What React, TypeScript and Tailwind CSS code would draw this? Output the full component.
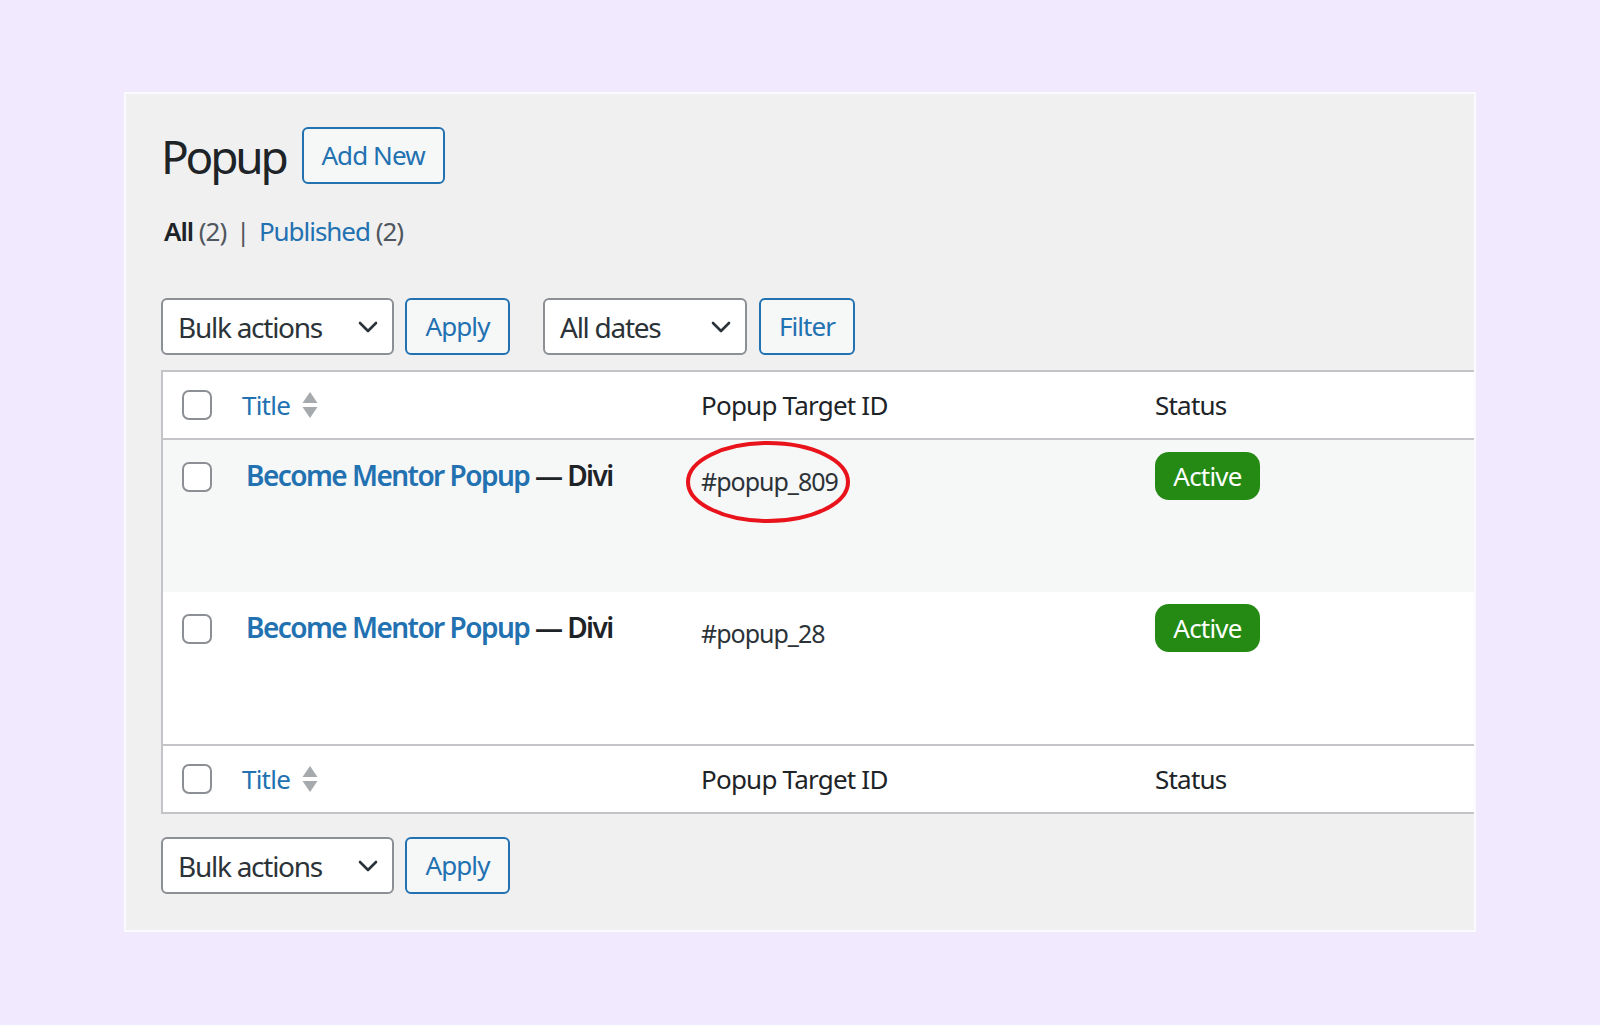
import type { ReactNode } from "react";

const font = { fontFamily: '"Noto Sans", "Open Sans", sans-serif' };

function Chevron() {
  return (
    <svg width="20" height="12" viewBox="0 0 20 12" className="shrink-0">
      <polyline points="2,2 10,10 18,2" fill="none" stroke="#2c3338" strokeWidth="2.6" strokeLinecap="round" strokeLinejoin="round" />
    </svg>
  );
}

function SelectBox({ label, width }: { label: string; width: string }) {
  return (
    <div className={`${width} h-[57px] flex items-center justify-between pl-[15px] pr-[14px] bg-white border-2 border-[#8c8f94] rounded-[6px] text-[28px] tracking-[-0.045em] text-[#2c3338]`}>
      <span>{label}</span>
      <Chevron />
    </div>
  );
}

function OutlineButton({ children, width }: { children: ReactNode; width: string }) {
  return (
    <button className={`${width} h-[57px] flex items-center justify-center bg-[#f6f7f7] border-2 border-[#2271b1] rounded-[6px] text-[26px] tracking-[-0.035em] text-[#2271b1]`}>
      {children}
    </button>
  );
}

function Checkbox() {
  return <div className="w-[30px] h-[30px] bg-white border-2 border-[#8c8f94] rounded-[7px]" />;
}

function SortArrows() {
  return (
    <svg width="16" height="28" viewBox="0 0 16 28" className="ml-[12px]">
      <polygon points="8,1 15.5,12 0.5,12" fill="#a7aaad" />
      <polygon points="0.5,16 15.5,16 8,27" fill="#a7aaad" />
    </svg>
  );
}

function HeadRow({ top }: { top: boolean }) {
  return (
    <div className={`grid grid-cols-[61px_458px_454px_1fr] h-[68px] items-center bg-white ${top ? "border-b-2" : "border-t-2"} border-[#c3c4c7] text-[26px] tracking-[-0.03em]`}>
      <div className="pl-[19px]">
        <Checkbox />
      </div>
      <div className="pl-[18px] flex items-center text-[#2271b1]">
        <span>Title</span>
        <SortArrows />
      </div>
      <div className="pl-[19px] text-[#1d2327]">Popup Target ID</div>
      <div className="pl-[19px] text-[#1d2327]">Status</div>
    </div>
  );
}

function DataRow({ target, shade, circled }: { target: string; shade: boolean; circled?: boolean }) {
  return (
    <div className={`grid grid-cols-[61px_458px_454px_1fr] h-[152px] ${shade ? "bg-[#f6f7f7]" : "bg-white"}`}>
      <div className="pl-[19px] pt-[22px]">
        <Checkbox />
      </div>
      <div className="pl-[22px] pt-[15px] text-[28px] font-semibold leading-[40px] tracking-[-0.055em]">
        <span className="text-[#2271b1]">Become Mentor Popup</span>
        <span className="text-[#1d2327]"> — Divi</span>
      </div>
      <div className="pl-[19px] pt-[23px] text-[25px] leading-[36px] tracking-[-0.04em] text-[#2c3338]">
        <span className="relative">
          {target}
          {circled && (
            <svg width="170" height="88" viewBox="0 0 170 88" className="absolute left-[-17px] top-[-26px] pointer-events-none">
              <ellipse cx="84" cy="44" rx="80" ry="39" fill="none" stroke="#e8131b" strokeWidth="4" />
            </svg>
          )}
        </span>
      </div>
      <div className="pl-[19px] pt-[12px]">
        <div className="w-[105px] h-[48px] flex items-center justify-center bg-[#248a14] rounded-[14px] text-white text-[26px] tracking-[-0.03em]">
          Active
        </div>
      </div>
    </div>
  );
}

export default function App() {
  return (
    <div className="w-[1600px] h-[1025px] bg-[#f1e9fe] pt-[92px] pl-[124px] overflow-hidden" style={font}>
      <div className="w-[1352px] h-[840px] bg-[#f0f0f1] border-2 border-[#fbfaff] overflow-hidden pl-[35px] pt-[33px]">
        <div className="flex items-center gap-[16px]">
          <h1 className="text-[46px] text-[#1d2327] leading-none tracking-[-0.07em]">Popup</h1>
          <OutlineButton width="w-[143px]">Add New</OutlineButton>
        </div>

        <div className="mt-[29px] text-[26px] leading-[36px] tracking-[-0.04em] text-[#50575e] pl-[3px]">
          <span className="font-semibold text-[#1d2327]">All</span> (2) <span className="text-[#50575e] px-[4px]">|</span>{" "}
          <span className="text-[#2271b1]">Published</span> (2)
        </div>

        <div className="mt-[49px] flex items-center">
          <SelectBox label="Bulk actions" width="w-[233px]" />
          <div className="ml-[11px]">
            <OutlineButton width="w-[105px]">Apply</OutlineButton>
          </div>
          <div className="ml-[33px]">
            <SelectBox label="All dates" width="w-[204px]" />
          </div>
          <div className="ml-[12px]">
            <OutlineButton width="w-[96px]">Filter</OutlineButton>
          </div>
        </div>

        <div className="mt-[15px] w-[1330px] border-2 border-[#c3c4c7]">
          <HeadRow top />
          <DataRow target="#popup_809" shade circled />
          <DataRow target="#popup_28" shade={false} />
          <HeadRow top={false} />
        </div>

        <div className="mt-[23px] flex items-center">
          <SelectBox label="Bulk actions" width="w-[233px]" />
          <div className="ml-[11px]">
            <OutlineButton width="w-[105px]">Apply</OutlineButton>
          </div>
        </div>
      </div>
    </div>
  );
}
